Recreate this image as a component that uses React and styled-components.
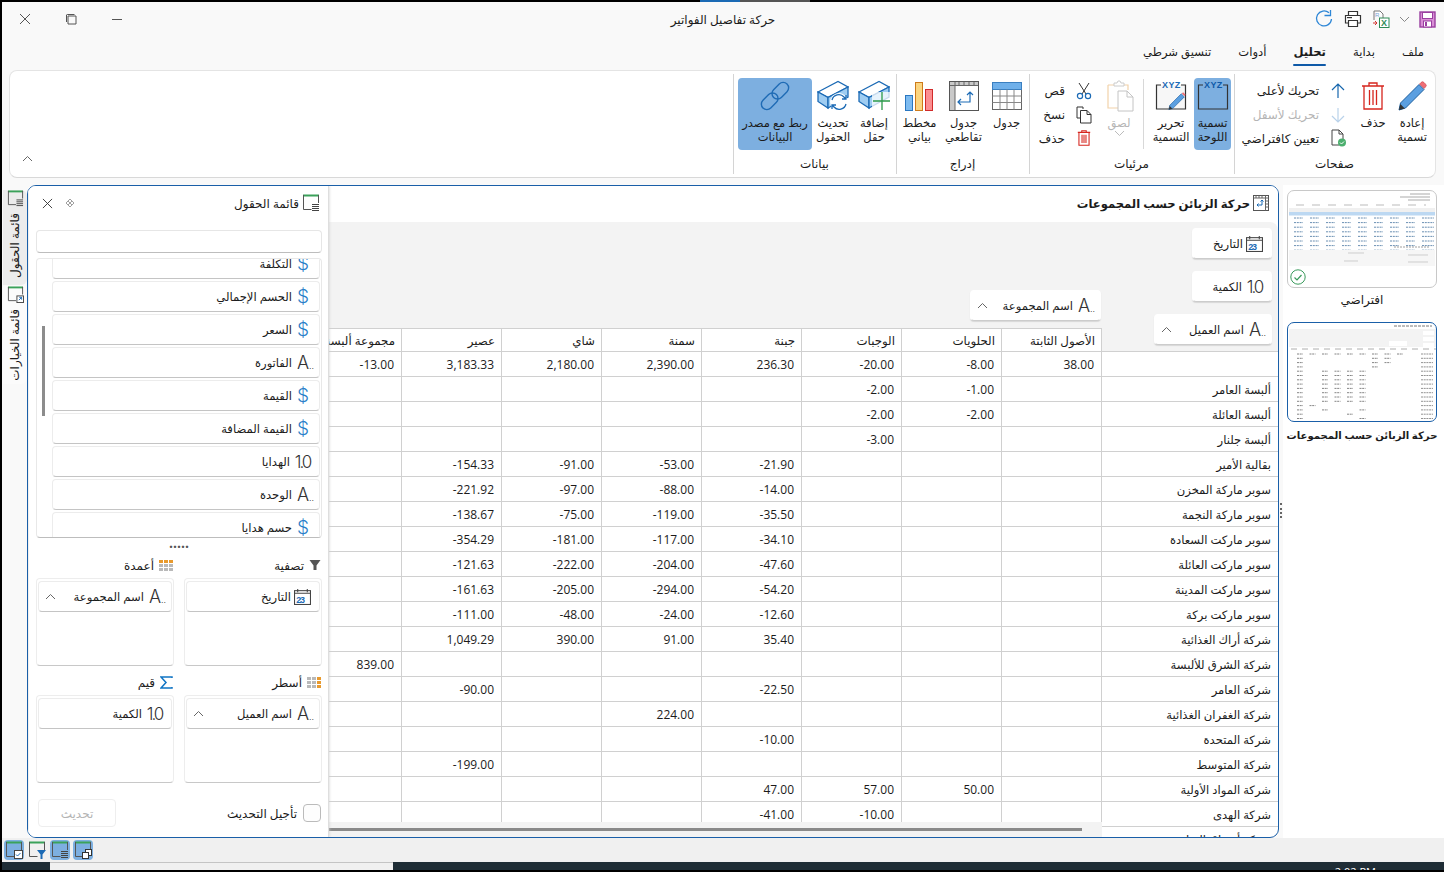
import React from 'react';
import styled, { createGlobalStyle } from 'styled-components';

const Global = createGlobalStyle`
  html, body { margin: 0; padding: 0; background: #000; }
  * { box-sizing: border-box; }
  body { font-family: "Open Sans", "DejaVu Sans", sans-serif; font-size: 12px; color: #1b1b1b; }
`;

const BLUE = '#1b6ab5';
const SEL = '#7dafe0';

const Screen = styled.div`
  width: 1444px; height: 872px; overflow: hidden; background: #000;
  padding-left: 2px; display: flex; flex-direction: column; direction: rtl;
`;
const WindowFrame = styled.div`
  flex: none; background: #f9f9f9; display: flex; flex-direction: column;
`;
const TopEdge = styled.div`
  height: 2px; flex: none; display: flex; direction: ltr; margin-left: 698px;
`;
const EdgeSeg = styled.div`
  width: ${p => p.$w}px; background: ${p => p.$c};
`;
const TitleBar = styled.div`
  height: 34px; flex: none; background: #f9f9f9;
  display: grid; grid-template-columns: 1fr auto 1fr; align-items: center;
`;
const QuickTools = styled.div`
  display: flex; align-items: center; padding-right: 6px;
`;
const Tool = styled.div`
  width: ${p => p.$w}px; display: flex; justify-content: center; align-items: center;
`;
const WindowTitle = styled.div`
  font-size: 12px; padding-top: 1px;
`;
const WindowButtons = styled.div`
  display: flex; justify-content: flex-end;
`;
const WindowButton = styled.div`
  width: 46px; height: 30px; display: flex; align-items: center; justify-content: center;
`;
const TabBar = styled.div`
  height: 34px; flex: none; background: #f9f9f9; display: flex; gap: 27px; padding-right: 20px;
`;
const Tab = styled.div`
  height: 34px; line-height: 32px; font-size: 11.6px; position: relative;
  font-weight: ${p => (p.$active ? 700 : 400)};
  ${p => p.$active && `&::after { content: ''; position: absolute; left: 0; right: 0; bottom: 4px; height: 2.5px; border-radius: 2px; background: #0f5aa8; }`}
`;
const Ribbon = styled.div`
  height: 108px; flex: none; margin: 0 8px 0 7px; background: #fff; border: 1px solid #e4e4e4; border-bottom-color: #d8d8d8;
  border-radius: 8px; display: flex; position: relative;
`;
const Collapse = styled.div`
  position: absolute; left: 12px; bottom: 15px; display: flex;
`;
const Group = styled.div`
  width: ${p => p.$w}px; flex: none; display: flex; flex-direction: column; align-items: stretch;
  padding: 7px 0 0; position: relative;
  &::after { content: ''; position: absolute; left: 0; top: 3px; bottom: 3px; width: 1px; background: #d4d4d4; }
`;
const GroupBody = styled.div`
  height: 72px; display: flex; justify-content: ${p => p.$justify || 'flex-start'}; padding: 0 ${p => p.$pad || 0}px;
`;
const GroupLabel = styled.div`
  text-align: center; font-size: 12px; line-height: 16px; margin-top: 6px;
`;
const Big = styled.div`
  width: ${p => p.$w || 44}px; height: 72px; flex: none; border-radius: 4px;
  background: ${p => (p.$on ? SEL : 'transparent')};
  color: ${p => (p.$off ? '#b5b5b5' : '#1b1b1b')};
  display: flex; flex-direction: column; align-items: center; padding-top: 2px;
  font-size: 11.5px; line-height: 14px; text-align: center;
`;
const BigIcon = styled.div`
  height: 32px; flex: none; display: flex; align-items: center; justify-content: center; margin-bottom: 4px;
`;
const VLine = styled.div`
  width: 1px; height: 70px; background: #d8d8d8; margin: 1px ${p => p.$m || 6}px 0;
  flex: none;
`;
const Stack = styled.div`
  display: flex; flex-direction: column; justify-content: flex-start; padding-top: 1px; width: ${p => p.$w}px; flex: none;
  margin-right: ${p => p.$mr || 0}px;
`;
const StackRow = styled.div`
  height: 25px; display: flex; align-items: center; gap: ${p => p.$gap || 8}px; font-size: 12px;
  color: ${p => (p.$off ? '#b5b5b5' : '#1b1b1b')};
  white-space: nowrap;
`;
const StackIcon = styled.div`
  width: 20px; flex: none; display: flex; justify-content: center; align-items: center;
`;

const Main = styled.div`
  height: 653px; flex: none; margin-top: 7px; display: flex; background: #f9f9f9;
`;
const PagesPane = styled.div`
  width: 161px; flex: none; background: #fff; display: flex; flex-direction: column; align-items: center;
  padding: 5px 0 0 0;
`;
const ThumbFrame = styled.div`
  width: 150px; height: ${p => p.$h}px; flex: none; margin-right: 3px; overflow: hidden; position: relative; background: #fff;
  border: ${p => (p.$active ? `1.5px solid ${'#1a5fa8'}` : '1px solid #c8c8c8')}; border-radius: 7px;
`;
const ThumbLabel = styled.div`
  font-size: ${p => (p.$bold ? 10.1 : 12)}px; line-height: 16px; margin: ${p => p.$m}; white-space: nowrap;
  font-weight: ${p => (p.$bold ? 700 : 400)};
`;
const CheckBadge = styled.div`
  position: absolute; left: 2px; bottom: 2px; display: flex;
`;
const Splitter = styled.div`
  width: 4px; flex: none; display: flex; align-items: center; justify-content: center; padding-bottom: 2px; background: #f9f9f9;
`;
const Grip = styled.div`
  width: 2px; height: 15px; border-left: 2px dotted #666;
`;
const Card = styled.div`
  width: 1252px; flex: none; background: #fff; border: 1px solid #1a5fa8; border-radius: 9px; display: flex; overflow: hidden;
`;
const Pivot = styled.div`
  flex: 1; min-width: 0; display: flex; flex-direction: column; position: relative; overflow: hidden;
`;
const PivotHead = styled.div`
  height: 36px; flex: none; display: flex; align-items: center; gap: 3px; padding: 0 9px 2px 0;
  font-weight: 700; font-size: 11.6px; background: #fff;
`;
const FilterBand = styled.div`
  height: 106px; flex: none; background: #f3f3f3; border-top-right-radius: 8px; display: grid;
  grid-template-columns: 177px 1fr; position: relative; z-index: 1;
`;
const RowFields = styled.div`
  display: flex; flex-direction: column; align-items: flex-start; padding: 6px 6px 0 0; gap: 12px;
`;
const ColFields = styled.div`
  padding-top: 68px; display: flex; align-items: flex-start;
`;
const TableWrap = styled.div`
  flex: 1; min-height: 0; overflow: hidden;
`;
const Table = styled.table`
  table-layout: fixed; border-collapse: separate; border-spacing: 0; width: 977px; font-size: 12px;
`;
const Corner = styled.th`
  width: 177px; height: 24px; background: #f3f3f3; border-bottom: 1px solid #d0d0d0; border-left: 1px solid #d0d0d0; padding: 0;
`;
const ColHead = styled.th`
  width: 100px; height: 24px; font-weight: 400; text-align: right; padding: 1px 6px 0; background: #fff;
  border-top: 1px solid #d0d0d0; border-left: 1px solid #d0d0d0; border-bottom: 1px solid #d0d0d0;
  white-space: nowrap; overflow: hidden; line-height: 21px; font-size: 11.8px;
`;
const RowHead = styled.td`
  height: 25px; padding: 0 7px; text-align: right; border-left: 1px solid #d0d0d0; border-bottom: 1px solid #d0d0d0; white-space: nowrap;
  font-size: 11.6px;
`;
const Num = styled.td`
  height: 25px; padding: 0 6px; direction: ltr; text-align: right; border-left: 1px solid #d0d0d0; border-bottom: 1px solid #d0d0d0;
`;
const HScroll = styled.div`
  position: absolute; left: 0; bottom: 0; width: 773px; height: 15px; background: #f3f3f3; padding-top: 6px; z-index: 2;
`;
const HThumb = styled.div`
  width: 753px; height: 3px; background: #8a8a8a; margin-right: 20px;
`;

const FieldList = styled.div`
  width: 301px; flex: none; border-right: 1px solid #dedede; border-left: 1px solid #f0f0f0; border-bottom: 0; background: #fff;
  display: flex; flex-direction: column; padding: 0 6px 0 7px; box-shadow: 0 0 3px #ccc; z-index: 3;
`;
const ListHead = styled.div`
  height: 36px; flex: none; display: flex; align-items: center; gap: 3px; padding: 0 2px 2px 0; font-size: 12px;
`;
const ListActions = styled.div`
  margin-right: auto; display: flex; align-items: center; gap: 12px; padding-left: 6px; direction: ltr;
  flex-direction: row-reverse;
`;
const Search = styled.div`
  height: 23px; flex: none; margin-top: 8px; border: 1px solid #e6e6e6; border-bottom-color: #bdbdbd; border-radius: 4px; background: #fff;
`;
const FieldBox = styled.div`
  height: 280px; flex: none; margin-top: 5px; border: 1px solid #e8e8e8; border-bottom-color: #bdbdbd; border-radius: 4px; overflow: hidden;
  padding: 0 1px 0 15px; position: relative;
`;
const FieldScroll = styled.div`
  position: absolute; left: 5px; top: 67px; width: 2.5px; height: 90px; background: #8c8c8c;
`;
const FieldItems = styled.div`
  margin-top: -11px; display: flex; flex-direction: column; gap: 2px;
`;
const FieldCard = styled.div`
  height: 31px; flex: none; width: ${p => (p.$w ? `${p.$w}px` : 'auto')}; background: #fff; border: 1px solid #ececec; border-bottom: 1.5px solid #c4c4c4; border-radius: 4px;
  display: flex; align-items: center; padding: 0 6px 0 4px; font-size: 11.6px; white-space: nowrap;
  ${p => p.$float && 'box-shadow: 0 1px 1px #d8d8d8; border-color: #fff; border-bottom-color: #ccc;'}
`;
const TypeIcon = styled.span`
  width: 21px; flex: none; display: inline-flex; justify-content: center; align-items: center; direction: ltr;
  font-family: Inter, "Open Sans", sans-serif; font-weight: 300; font-size: ${p => p.$size || 18}px; line-height: 20px;
  color: ${p => p.$c || '#333'}; letter-spacing: ${p => p.$track || -1}px; position: relative;
  margin-left: ${p => p.$ml || 0}px;
`;
const Dots = styled.sup`
  font-size: 9px; line-height: 1; vertical-align: -3px; letter-spacing: 0; position: absolute; right: -1px; bottom: 3px;
`;
const Chevron = styled.div`
  margin-right: auto; display: flex; padding-left: 2px;
`;
const Handle = styled.div`
  height: 17px; flex: none; text-align: center; line-height: 7px; font-size: 14px; color: #555; letter-spacing: 0; font-weight: 700; padding-top: 1px;
`;
const Zones = styled.div`
  display: grid; grid-template-columns: 138px 138px; column-gap: 10px; direction: rtl;
`;
const Zone = styled.div`
  display: flex; flex-direction: column;
`;
const ZoneLabel = styled.div`
  height: 20px; display: flex; align-items: center; gap: 5px; padding-right: 1px; font-size: 12px;
`;
const ZoneBox = styled.div`
  height: 88px; margin-top: 3px; margin-bottom: 6px; border: 1px solid #ededed; border-bottom: 1.5px solid #c8c8c8; border-radius: 4px; padding: 2px 1px 0;
`;
const Footer = styled.div`
  margin-top: 10px; height: 28px; display: flex; align-items: center; padding-right: 1px;
`;
const CheckBox = styled.div`
  width: 18px; height: 18px; border: 1px solid #bbb; border-radius: 4px; flex: none; margin-left: 6px; background: #fdfdfd;
`;
const UpdateBtn = styled.div`
  margin-right: auto; margin-left: 2px; width: 78px; height: 28px; border: 1px solid #eee; border-radius: 4px; display: flex; align-items: center; justify-content: center; color: #b4b4b4; font-size: 12px;
`;

const Rail = styled.div`
  width: 25px; flex: none; background: #f9f9f9; padding-top: 5px; display: flex; flex-direction: column; gap: 1px;
`;
const RailTab = styled.div`
  height: ${p => p.$h}px; flex: none; margin-left: 1px; display: flex; flex-direction: column; align-items: center; gap: 6px;
  background: ${p => (p.$on ? '#ececec' : '#fbfbfb')}; border-radius: 0 6px 6px 0;
`;
const RailText = styled.div`
  writing-mode: vertical-rl; transform: rotate(180deg); font-size: 12px; line-height: 18px; white-space: nowrap;
`;

const StatusBar = styled.div`
  height: 24px; flex: none; background: #f0f0f0; display: flex; direction: ltr; align-items: center; gap: 3px; padding-left: 2px;
`;
const StatusBtn = styled.div`
  width: 20px; height: 20px; display: flex; align-items: center; justify-content: center; border-radius: 4px;
  background: ${p => (p.$on ? SEL : 'transparent')};
`;
const Taskbar = styled.div`
  height: 8px; flex: none; display: flex; direction: ltr; background: #1f2d36; overflow: hidden; margin-bottom: 2px;
`;
const TaskLeft = styled.div`
  width: 48px; flex: none;
`;
const TaskGap = styled.div`
  width: 343px; flex: none; background: #f0f0f0; border-top: 1px solid #c4c4c4;
`;
const Clock = styled.div`
  margin-left: auto; margin-right: 68px; color: #fff; font-size: 11px; line-height: 14px; padding-top: 3px; font-family: "Open Sans", sans-serif;
`;

/* ---------- icons ---------- */
const Svg = ({ w, h, vb, children }) => (
  <svg width={w} height={h || w} viewBox={vb || `0 0 ${w} ${h || w}`} style={{ display: 'block', direction: 'ltr' }}>{children}</svg>
);
const CloseIcon = ({ s = 12, c = '#555' }) => <Svg w={s} vb="0 0 12 12"><path d="M1 1l10 10M11 1L1 11" stroke={c} strokeWidth="1" fill="none" /></Svg>;
const RestoreIcon = () => <Svg w={12}><path d="M2.5 2.5V10.5H10.5V2.5ZM1 8.5V1.5A.8.8 0 0 1 1.8 1H9" transform="translate(.5 .5)" stroke="#555" fill="none" /></Svg>;
const MinIcon = () => <Svg w={12}><path d="M1 6.5h10" stroke="#555" /></Svg>;
const ChevUp = ({ s = 11 }) => <Svg w={s} h={7} vb="0 0 11 7"><path d="M1 6l4.5-4.5L10 6" stroke="#666" fill="none" /></Svg>;
const ChevDown = ({ c = '#888', s = 11 }) => <Svg w={s} h={7} vb="0 0 11 7"><path d="M1 1l4.5 4.5L10 1" stroke={c} fill="none" /></Svg>;
const RefreshIcon = () => <Svg w={20}><path d="M15 3.8A7.5 7.5 0 1 0 17.5 10" stroke="#2d86d6" strokeWidth="1.3" fill="none" /><path d="M10.5 3.5h6V-2" transform="translate(0 3)" stroke="#2d86d6" strokeWidth="1.3" fill="none" /></Svg>;
const PrintIcon = () => <Svg w={18}><path d="M4.5 5V1.5h9V5M4.5 13H1.5V5.500h15V13H13.5M4.5 10.5h9v6h-9z" stroke="#333" strokeWidth="1.2" fill="#fff" /><rect x="3" y="7" width="5" height="1.2" fill="#333" /></Svg>;
const ExcelIcon = () => <Svg w={18}><path d="M2 1h6l3 3v4M2 1v9" stroke="#777" fill="#fff" /><text x="3" y="7" fontSize="6" fill="#7aa6d8" fontFamily="Liberation Sans">R</text><path d="M1 13h4l-2-2M5 13l-2 2" stroke="#d2332e" fill="none" /><rect x="7.5" y="8" width="9.5" height="9.5" fill="#fff" stroke="#2e8b57" /><text x="9" y="16" fontSize="9" fontWeight="700" fill="#2e8b57" fontFamily="Liberation Sans">X</text></Svg>;
const SaveIcon = () => <Svg w={17}><rect x="1" y="1" width="15" height="15" fill="#d98fd6" stroke="#9a3fa0" strokeWidth="1.4" /><rect x="3.5" y="1.5" width="10" height="6" fill="#fff" stroke="#9a3fa0" /><rect x="4.5" y="10" width="8" height="6" fill="#fff" stroke="#9a3fa0" /><rect x="6" y="11" width="2" height="4" fill="#9a3fa0" /></Svg>;
const PencilIcon = ({ s = 32 }) => <Svg w={s} vb="0 0 32 32"><path d="M3 30l1.5-7L23 4.5 28 9.500 9.500 28z" fill="#5b9fe0" stroke="#1d5f9f" /><path d="M23.500 4l1.500-1.500a2 2 0 0 1 3 0l1.500 1.500a2 2 0 0 1 0 3L28 8.500z" fill="#ef6f76" stroke="#c73b45" strokeWidth=".6" /><path d="M3 30l1.300-6 4.500 4.600z" fill="#333" /></Svg>;
const TrashIcon = ({ s = 32, c = '#d6261e' }) => <Svg w={s} vb="0 0 32 32"><path d="M5 6h22M12 6V3h8v3M7 6v23h18V6M12.500 10v15M16 10v15M19.500 10v15" stroke={c} strokeWidth={s < 24 ? 1.9 : 1.3} fill="none" /></Svg>;
const ArrowIcon = ({ c, down }) => <Svg w={16}><path d={down ? 'M8 1v14M2 9l6 6 6-6' : 'M8 15V1M2 7l6-6 6 6'} stroke={c} strokeWidth="1.2" fill="none" /></Svg>;
const DocCheck = () => <Svg w={18}><path d="M3 1h7l4 4v6M10 1v4h4M3 1v15h7" stroke="#444" fill="none" /><circle cx="13" cy="13.5" r="4" fill="#4caf6e" /><path d="M11 13.5l1.500 1.500 2.500-2.500" stroke="#fff" fill="none" /></Svg>;
const XyzIcon = ({ edit, dark }) => (
  <Svg w={32}>
    <path d="M6 5H1.500V29H30.500V5H26" stroke="#333" strokeWidth="1.2" fill={dark ? 'none' : '#f7f7f7'} />
    <text x="7" y="8" fontSize="9" fontWeight="700" fill={dark ? '#0f5aa8' : BLUE} fontFamily="Liberation Sans" letterSpacing=".4">XYZ</text>
    {edit && <g transform="translate(12 11) scale(.62)"><path d="M3 30l1.500-7L23 4.500 28 9.500 9.500 28z" fill="#5b9fe0" stroke="#1d5f9f" /><path d="M24 4l2-2 4 4-2 2z" fill="#ef6f76" /><path d="M3 30l1.300-6 4.500 4.600z" fill="#333" /></g>}
  </Svg>
);
const PasteIcon = () => <Svg w={32}><path d="M5 5h6M21 5h4v5M5 5v23h10" stroke="#f2d2aa" strokeWidth="1.2" fill="none" /><path d="M11 6V3h3l1-2h2l1 2h3v3z" stroke="#ccc" fill="#fff" /><path d="M15 11h9l6 6v14H15z M24 11v6h6" stroke="#c4c4c4" fill="#fff" /></Svg>;
const ScissorsIcon = () => <Svg w={18}><path d="M4 1l7 11M14 1L7 12" stroke="#333" fill="none" /><circle cx="5" cy="14" r="2.600" stroke={BLUE} fill="none" strokeWidth="1.2" /><circle cx="13" cy="14" r="2.600" stroke={BLUE} fill="none" strokeWidth="1.2" /></Svg>;
const CopyIcon = () => <Svg w={18}><path d="M2 1h6v2M2 1v11h3" stroke="#333" fill="none" /><path d="M5.500 4.500H12l4 4v8.500H5.500zM12 4.500v4h4" stroke="#333" fill="#fff" /></Svg>;
const TableIcon = () => <Svg w={30} h={28} vb="0 0 30 28"><rect x=".5" y=".5" width="29" height="27" fill="#fff" stroke="#666" /><rect x=".5" y=".5" width="29" height="7" fill="#6fb0ea" stroke="#3a7fc0" /><path d="M.5 14h29M.5 20.500h29M8 7.500v20M15 7.500v20M22 7.500v20" stroke="#888" /></Svg>;
const PivotIcon = () => <Svg w={30}><rect x=".5" y=".5" width="29" height="29" fill="#fff" stroke="#555" /><rect x=".5" y=".5" width="29" height="4" fill="#c9c9c9" /><rect x=".5" y=".5" width="5.500" height="29" fill="#c9c9c9" /><path d="M.5 4.500h29M6 .5v29M10 .5v4M15 .5v4M20 .5v4M25 .5v4" stroke="#666" /><path d="M21 11v10H9M18 14l3-3 3 3M12 18l-3 3 3 3" stroke={BLUE} strokeWidth="1.2" fill="none" /><rect x=".5" y=".5" width="29" height="29" fill="none" stroke="#555" /></Svg>;
const ChartIcon = () => <Svg w={30}><rect x=".5" y="14.500" width="7" height="15" fill="#7dbbf0" stroke="#2a77c0" /><rect x="10.500" y="1.500" width="7" height="28" fill="#fbd580" stroke="#cd7a1a" /><rect x="20.500" y="8.500" width="7" height="21" fill="#fb8e90" stroke="#d12a2a" /></Svg>;
const BoxIcon = ({ children }) => (
  <Svg w={32}>
    <path d="M1 12L21 1.500 31 7 11 17.500z" fill="#fff" stroke={BLUE} strokeWidth="1.3" />
    <path d="M1 12v9.500L11 28V17.500z" fill="#9fcdf2" stroke={BLUE} strokeWidth="1.3" />
    <path d="M11 17.500V28L31 17V7z" fill="#9fcdf2" stroke={BLUE} strokeWidth="1.3" />
    {children}
  </Svg>
);
const PlusOverlay = () => <g><rect x="14" y="12" width="18" height="18" fill="#fff" opacity=".75" /><path d="M24 12v18M15 21h17" stroke="#2c9b4a" strokeWidth="1.3" /></g>;
const RefreshOverlay = () => <g fill="none" stroke={BLUE} strokeWidth="1.3"><circle cx="22" cy="22" r="9" fill="#fff" stroke="none" /><path d="M15 20a7 7 0 0 1 12-3l2 2M29 15v4h-4M29 24a7 7 0 0 1-12 3l-2-2M15 29v-4h4" /></g>;
const LinkIcon = () => <Svg w={32}><g transform="rotate(-45 16 16)" fill="none" stroke="#1f6bb5" strokeWidth="1.4"><rect x="-1" y="10.500" width="19" height="11" rx="5.500" /><rect x="14" y="10.500" width="19" height="11" rx="5.500" /></g></Svg>;
const FieldsIcon = ({ s = 18, mark }) => (
  <Svg w={s} vb="0 0 18 18">
    <path d="M1 1.500h16" stroke="#3ba25a" strokeWidth="2" />
    <path d="M1.500 1v14.500h8M16.500 1v8" stroke="#555" fill="none" />
    {mark === 'lines' && <path d="M10 10.500h7M10 12.500h7M10 14.500h7M10 16.500h7" stroke="#444" strokeWidth="1" />}
    {mark === 'box' && <g><rect x="10.500" y="10.500" width="7" height="7" fill="#fff" stroke="#444" /><path d="M12.500 15l3-3M13 12h2.500v2.500" stroke={BLUE} fill="none" /></g>}
    {mark === 'check' && <g><rect x="9.500" y="9.500" width="8" height="8" fill="#fff" stroke="#444" /><path d="M11 13.500l1.500 1.500 3-3" stroke={BLUE} fill="none" /></g>}
    {mark === 'funnel' && <path d="M9 9h9l-3.500 4.500V18h-2v-4.500z" fill={BLUE} />}
    {mark === 'copy' && <g><rect x="11.500" y="8.500" width="6" height="6" fill="#fff" stroke="#333" /><rect x="8.500" y="11.500" width="6" height="6" fill="#fff" stroke="#333" /></g>}
  </Svg>
);
const PinIcon = () => <Svg w={10}><path d="M5 1L1 5l4 4 4-4zM3 3l4 4M7 3L3 7" stroke="#888" strokeWidth=".8" fill="none" /></Svg>;
const Calendar = ({ s = 17 }) => (
  <Svg w={s} vb="0 0 16 16">
    <rect x=".5" y="2.500" width="15" height="13" fill="#fff" stroke="#444" />
    <path d="M.5 5h15M3.500 1v3M12.500 1v3" stroke="#444" />
    <text x="2" y="14" fontSize="8.500" fontWeight="700" fill={BLUE} fontFamily="Liberation Sans">23</text>
  </Svg>
);
const FunnelIcon = () => <Svg w={12}><path d="M.5 1h11L7.500 6.500V11h-3V6.500z" fill="#555" /></Svg>;
const GridDots = ({ col }) => {
  const cells = [];
  for (let r = 0; r < 3; r++) for (let c = 0; c < 3; c++) {
    const on = col ? r === 0 : c === 2;
    cells.push(<rect key={`${r}${c}`} x={c * 5} y={r * 4} width="4" height="3" fill={on ? '#e89a2e' : '#b9b9b9'} />);
  }
  return <Svg w={14} h={11} vb="0 0 14 11">{cells}</Svg>;
};
const SigmaIcon = () => <Svg w={13}><path d="M12 2V1H1l5 5.500L1 12h11v-1" stroke="#0f74c4" strokeWidth="1.5" fill="none" /></Svg>;
const PivotTitleIcon = () => <Svg w={16}><rect x=".5" y=".5" width="15" height="15" fill="#fff" stroke="#555" /><path d="M.5 3h15M12.500.5v15M12.500 6h3M12.500 9h3M12.500 12h3M3 .5v2.500M6 .5v2.500M9 .5v2.500" stroke="#666" /><path d="M9 5v5H4M7.500 6.500L9 5l1.500 1.500M5.500 8.500L4 10l1.500 1.500" stroke={BLUE} fill="none" /></Svg>;

const DollarType = () => <TypeIcon $c="#2a7fc9" $size={19}>$</TypeIcon>;
const TextType = () => <TypeIcon>A<Dots>..</Dots></TypeIcon>;
const NumType = () => <TypeIcon $track={-2} $size={17} $ml={2}>1.0</TypeIcon>;
const DateType = () => <TypeIcon $ml={1}><Calendar /></TypeIcon>;

const ThumbOne = () => {
  const rows = [];
  for (let i = 0; i < 9; i++) {
    const y = 27 + i * 4.6;
    rows.push(<path key={i} d={Array.from({ length: 9 }, (_, c) => `M${6 + c * 16} ${y}h${c === 8 ? 12 : 9}`).join('')} stroke="#44729e" strokeWidth=".8" strokeDasharray="2 .8" />);
  }
  return (
    <svg width="148" height="96" viewBox="0 0 148 96" style={{ display: 'block' }}>
      <path d="M122 3h20M112 6h30M120 9h22" stroke="#888" strokeWidth=".7" />
      <path d="M8 14h130" stroke="#aaa" strokeWidth=".8" strokeDasharray="8 8" />
      <rect x="1" y="17" width="146" height="4" fill="#f0f0f0" />
      <rect x="1" y="21" width="146" height="3.500" fill="#bcd8f2" />
      {rows}
      <rect x="1" y="66" width="146" height="1" fill="#eee" />
      <path d="M106 56h36" stroke="#888" strokeDasharray="2 1" strokeWidth=".8" />
      <rect x="1" y="59" width="146" height="16" fill="#f6f6f6" />
      <path d="M120 64h20M120 71h20M60 62h16M56 70h14" stroke="#bbb" strokeWidth=".7" />
    </svg>
  );
};
const ThumbTwo = () => {
  const pat = [[1,1,1,1,1,1,1,1,1],[0,1,1,0,0,0,0,0,1],[0,1,1,0,0,0,0,0,1],[0,0,1,0,0,0,0,0,1],[0,0,0,1,1,1,1,0,1],[0,0,0,1,1,1,1,0,1],[0,0,0,1,1,1,1,0,1],[0,0,0,1,1,1,1,0,1],[0,0,0,1,1,1,1,0,1],[0,0,0,1,1,1,1,0,1],[0,0,0,1,1,1,1,0,1],[0,0,0,1,1,1,1,0,1],[0,0,0,0,0,0,0,1,1],[0,0,0,1,0,0,1,0,1],[0,0,0,0,1,0,0,0,1],[0,0,0,1,0,0,0,0,1]];
  return (
    <svg width="147" height="97" viewBox="0 0 147 97" style={{ display: 'block' }}>
      <path d="M105 3h38" stroke="#555" strokeWidth=".8" strokeDasharray="3 1" />
      <rect x="0" y="6" width="147" height="18" fill="#f3f3f3" />
      <rect x="134" y="8" width="11" height="4" fill="#fff" /><rect x="134" y="14" width="11" height="4" fill="#fff" /><rect x="134" y="20" width="11" height="4" fill="#fff" />
      <rect x="100" y="18" width="18" height="5" fill="#fff" />
      <path d="M2 26h146" stroke="#999" strokeDasharray="6 5" strokeWidth=".8" />
      {pat.map((r, i) => (
        <g key={i}>
          {r.map((v, c) => (v ? <path key={c} d={`M${108 - c * 12.5} ${31 + i * 4.3}h6`} stroke="#666" strokeWidth=".8" strokeDasharray="2 .7" /> : null))}
          <path d={`M132 ${31 + i * 4.3}h12`} stroke="#777" strokeWidth=".8" strokeDasharray="2 .7" />
        </g>
      ))}
    </svg>
  );
};

/* ---------- data ---------- */
const cols = ['الأصول الثابتة', 'الحلويات', 'الوجبات', 'جبنة', 'سمنة', 'شاي', 'عصير', 'مجموعة ألبسة'];
const rows = [
  ['', '38.00', '-8.00', '-20.00', '236.30', '2,390.00', '2,180.00', '3,183.33', '-13.00'],
  ['ألبسة العامر', '', '-1.00', '-2.00'],
  ['ألبسة العائلة', '', '-2.00', '-2.00'],
  ['ألبسة جلنار', '', '', '-3.00'],
  ['بقالية الأمير', '', '', '', '-21.90', '-53.00', '-91.00', '-154.33'],
  ['سوبر ماركة المخزن', '', '', '', '-14.00', '-88.00', '-97.00', '-221.92'],
  ['سوبر ماركة النجمة', '', '', '', '-35.50', '-119.00', '-75.00', '-138.67'],
  ['سوبر ماركت السعادة', '', '', '', '-34.10', '-117.00', '-181.00', '-354.29'],
  ['سوبر ماركت العائلة', '', '', '', '-47.60', '-204.00', '-222.00', '-121.63'],
  ['سوبر ماركت المدينة', '', '', '', '-54.20', '-294.00', '-205.00', '-161.63'],
  ['سوبر ماركت بركة', '', '', '', '-12.60', '-24.00', '-48.00', '-111.00'],
  ['شركة أراك الغذائية', '', '', '', '35.40', '91.00', '390.00', '1,049.29'],
  ['شركة الشرق للألبسة', '', '', '', '', '', '', '', '839.00'],
  ['شركة العامر', '', '', '', '-22.50', '', '', '-90.00'],
  ['شركة الغفران الغذائية', '', '', '', '', '224.00'],
  ['شركة المتحدة', '', '', '', '-10.00'],
  ['شركة المتوسط', '', '', '', '', '', '', '-199.00'],
  ['شركة المواد الأولية', '', '50.00', '57.00', '47.00'],
  ['شركة الهدى', '', '', '-10.00', '-41.00'],
  ['شركة أسواق الرياض'],
];
const fields = [
  ['التكلفة', DollarType], ['الحسم الإجمالي', DollarType], ['السعر', DollarType], ['الفاتورة', TextType],
  ['القيمة', DollarType], ['القيمة المضافة', DollarType], ['الهدايا', NumType], ['الوحدة', TextType], ['حسم هدايا', DollarType],
];

const FieldPill = ({ label, Type, chev, w, float }) => (
  <FieldCard $w={w} $float={float}>
    <Type />
    <span>{label}</span>
    {chev && <Chevron><ChevUp /></Chevron>}
  </FieldCard>
);

export default function App() {
  return (
    <Screen>
      <Global />
      <TopEdge><EdgeSeg $w={40} $c="#1b6ab5" /><EdgeSeg $w={70} $c="#555" /></TopEdge>
      <WindowFrame>
        <TitleBar>
          <QuickTools>
            <Tool $w={22}><SaveIcon /></Tool>
            <Tool $w={24}><ChevDown /></Tool>
            <Tool $w={22}><ExcelIcon /></Tool>
            <Tool $w={34}><PrintIcon /></Tool>
            <Tool $w={24}><RefreshIcon /></Tool>
          </QuickTools>
          <WindowTitle>حركة تفاصيل الفواتير</WindowTitle>
          <WindowButtons>
            <WindowButton><MinIcon /></WindowButton>
            <WindowButton><RestoreIcon /></WindowButton>
            <WindowButton><CloseIcon /></WindowButton>
          </WindowButtons>
        </TitleBar>
        <TabBar>
          <Tab>ملف</Tab><Tab>بداية</Tab><Tab $active>تحليل</Tab><Tab>أدوات</Tab><Tab>تنسيق شرطي</Tab>
        </TabBar>
        <Ribbon>
          <Group $w={201}>
            <GroupBody $pad={2}>
              <Big $w={42}><BigIcon><PencilIcon /></BigIcon>إعادة<br />تسمية</Big>
              <Big $w={36}><BigIcon><TrashIcon /></BigIcon>حذف</Big>
              <Stack $w={110} $mr={7}>
                <StackRow $gap={9}><StackIcon><ArrowIcon c="#1666ad" /></StackIcon>تحريك لأعلى</StackRow>
                <StackRow $off $gap={9}><StackIcon><ArrowIcon c="#b9d2ea" down /></StackIcon>تحريك لأسفل</StackRow>
                <StackRow $gap={9}><StackIcon><DocCheck /></StackIcon>تعيين كافتراضي</StackRow>
              </Stack>
            </GroupBody>
            <GroupLabel>صفحات</GroupLabel>
          </Group>
          <Group $w={205}>
            <GroupBody $pad={3}>
              <Big $w={37} $on><BigIcon><XyzIcon dark /></BigIcon>تسمية<br />اللوحة</Big>
              <Big $w={46}><BigIcon><XyzIcon edit /></BigIcon>تحرير<br />التسمية</Big>
              <VLine $m={4} />
              <Big $w={40} $off><BigIcon><PasteIcon /></BigIcon>لصق<ChevDown c="#bbb" /></Big>
              <Stack $w={56} $mr={5}>
                <StackRow $gap={9}><StackIcon><ScissorsIcon /></StackIcon>قص</StackRow>
                <StackRow $gap={9}><StackIcon><CopyIcon /></StackIcon>نسخ</StackRow>
                <StackRow $gap={9}><StackIcon><TrashIcon s={18} /></StackIcon>حذف</StackRow>
              </Stack>
            </GroupBody>
            <GroupLabel>مرئيات</GroupLabel>
          </Group>
          <Group $w={133}>
            <GroupBody $pad={0} $justify="center">
              <Big $w={42}><BigIcon><TableIcon /></BigIcon>جدول</Big>
              <Big $w={44}><BigIcon><PivotIcon /></BigIcon>جدول<br />تقاطعي</Big>
              <Big $w={44}><BigIcon><ChartIcon /></BigIcon>مخطط<br />بياني</Big>
            </GroupBody>
            <GroupLabel>إدراج</GroupLabel>
          </Group>
          <Group $w={163}>
            <GroupBody $pad={2}>
              <Big $w={40}><BigIcon><BoxIcon><PlusOverlay /></BoxIcon></BigIcon>إضافة<br />حقل</Big>
              <Big $w={42}><BigIcon><BoxIcon><RefreshOverlay /></BoxIcon></BigIcon>تحديث<br />الحقول</Big>
              <Big $w={74} $on><BigIcon><LinkIcon /></BigIcon>ربط مع مصدر<br />البيانات</Big>
            </GroupBody>
            <GroupLabel>بيانات</GroupLabel>
          </Group>
          <Collapse><ChevUp /></Collapse>
        </Ribbon>
        <Main>
          <PagesPane>
            <ThumbFrame $h={98}>
              <ThumbOne />
              <CheckBadge>
                <Svg w={16}><circle cx="8" cy="8" r="7.2" fill="#fff" stroke="#3a9a5c" /><path d="M4.500 8.500l2.500 2.500 4.500-5" stroke="#3a9a5c" fill="none" strokeWidth="1.2" /></Svg>
              </CheckBadge>
            </ThumbFrame>
            <ThumbLabel $m="4px 3px 14px 0">افتراضي</ThumbLabel>
            <ThumbFrame $h={100} $active><ThumbTwo /></ThumbFrame>
            <ThumbLabel $m="5px 3px 0 0" $bold>حركة الزبائن حسب المجموعات</ThumbLabel>
          </PagesPane>
          <Splitter><Grip /></Splitter>
          <Card>
            <Pivot>
              <PivotHead><PivotTitleIcon />حركة الزبائن حسب المجموعات</PivotHead>
              <FilterBand>
                <RowFields>
                  <FieldPill label="التاريخ" Type={DateType} w={80} float />
                  <FieldPill label="الكمية" Type={NumType} w={80} float />
                  <FieldPill label="اسم العميل" Type={TextType} w={118} chev float />
                </RowFields>
                <ColFields>
                  <FieldPill label="اسم المجموعة" Type={TextType} w={131} chev float />
                </ColFields>
              </FilterBand>
              <TableWrap>
                <Table>
                  <thead>
                    <tr>
                      <Corner />
                      {cols.map(c => <ColHead key={c}>{c}</ColHead>)}
                    </tr>
                  </thead>
                  <tbody>
                    {rows.map((r, i) => (
                      <tr key={i}>
                        <RowHead>{r[0]}</RowHead>
                        {cols.map((_, c) => <Num key={c}>{r[c + 1] || ''}</Num>)}
                      </tr>
                    ))}
                  </tbody>
                </Table>
              </TableWrap>
              <HScroll><HThumb /></HScroll>
            </Pivot>
            <FieldList>
              <ListHead>
                <FieldsIcon mark="lines" />
                قائمة الحقول
                <ListActions><PinIcon /><CloseIcon s={11} c="#333" /></ListActions>
              </ListHead>
              <Search />
              <FieldBox>
                <FieldScroll />
                <FieldItems>
                  {fields.map(([l, T]) => <FieldPill key={l} label={l} Type={T} />)}
                </FieldItems>
              </FieldBox>
              <Handle>.....</Handle>
              <Zones>
                <Zone>
                  <ZoneLabel><FunnelIcon />تصفية</ZoneLabel>
                  <ZoneBox><FieldPill label="التاريخ" Type={DateType} /></ZoneBox>
                </Zone>
                <Zone>
                  <ZoneLabel><GridDots col />أعمدة</ZoneLabel>
                  <ZoneBox><FieldPill label="اسم المجموعة" Type={TextType} chev /></ZoneBox>
                </Zone>
                <Zone>
                  <ZoneLabel><GridDots />أسطر</ZoneLabel>
                  <ZoneBox><FieldPill label="اسم العميل" Type={TextType} chev /></ZoneBox>
                </Zone>
                <Zone>
                  <ZoneLabel><SigmaIcon />قيم</ZoneLabel>
                  <ZoneBox><FieldPill label="الكمية" Type={NumType} /></ZoneBox>
                </Zone>
              </Zones>
              <Footer>
                <CheckBox />
                تأجيل التحديث
                <UpdateBtn>تحديث</UpdateBtn>
              </Footer>
            </FieldList>
          </Card>
          <Rail>
            <RailTab $h={95} $on><FieldsIcon s={17} mark="lines" /><RailText>قائمة الحقول</RailText></RailTab>
            <RailTab $h={98}><FieldsIcon s={17} mark="box" /><RailText>قائمة الخيارات</RailText></RailTab>
          </Rail>
        </Main>
      </WindowFrame>
      <StatusBar>
        <StatusBtn $on><FieldsIcon mark="check" /></StatusBtn>
        <StatusBtn><FieldsIcon mark="funnel" /></StatusBtn>
        <StatusBtn $on><FieldsIcon mark="lines" /></StatusBtn>
        <StatusBtn $on><FieldsIcon mark="copy" /></StatusBtn>
      </StatusBar>
      <Taskbar>
        <TaskLeft />
        <TaskGap />
        <Clock>2:02 PM</Clock>
      </Taskbar>
    </Screen>
  );
}
